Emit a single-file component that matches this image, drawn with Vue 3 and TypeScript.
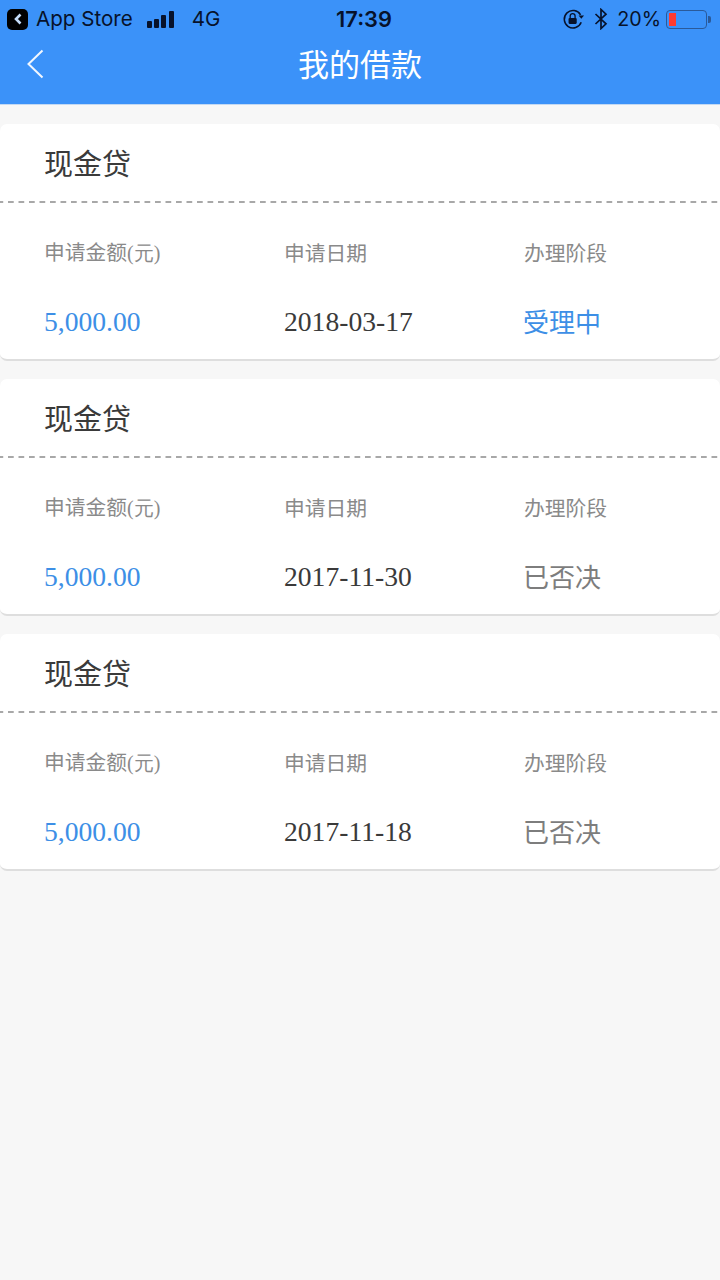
<script setup lang="ts">
interface Loan {
  date: string
  stage: string
  active: boolean
}
const loans: Loan[] = [
  { date: '2018-03-17', stage: '受理中', active: true },
  { date: '2017-11-30', stage: '已否决', active: false },
  { date: '2017-11-18', stage: '已否决', active: false },
]
</script>

<template>
  <div class="page">
    <header class="head">
      <div class="status">
        <div class="status-left">
          <span class="back-badge">
            <svg width="12" height="14" viewBox="0 0 12 14"><path d="M8.500 2.500 4 7l4.500 4.500" fill="none" stroke="#c4dcf9" stroke-width="2.600" /></svg>
          </span>
          <span class="st-text app">App Store</span>
          <span class="bars"><i class="b1"></i><i class="b2"></i><i class="b3"></i><i class="b4"></i></span>
          <span class="st-text net">4G</span>
        </div>
        <div class="time">17:39</div>
        <div class="status-right">
          <svg class="lock" width="24" height="22" viewBox="0 0 22 20">
            <path d="M17 6.200A8 8 0 1 0 17.600 13" fill="none" stroke="#07122b" stroke-width="1.400" />
            <path d="M15.200 7.800h5l-2.500 3z" fill="#07122b" transform="translate(0 -1)" />
            <rect x="6" y="9" width="7.500" height="5.500" rx="1" fill="#07122b" />
            <path d="M7.500 9V7.300a2.200 2.200 0 0 1 4.500 0V9" fill="none" stroke="#07122b" stroke-width="1.200" />
          </svg>
          <svg class="bt" width="14" height="22" viewBox="0 0 14 22">
            <path d="M1.500 6 12 15.800 7 20.500V1.500L12 6.200 1.500 16" fill="none" stroke="#07122b" stroke-width="1.700" />
          </svg>
          <span class="st-text pct">20%</span>
          <span class="battery"><span class="fill"></span></span>
          <span class="nub"></span>
        </div>
      </div>
      <div class="nav">
        <svg class="chev" width="18" height="30" viewBox="0 0 18 30"><path d="M16.500 1.500 2.500 15l14 13.500" fill="none" stroke="#f2f7fe" stroke-width="2" /></svg>
        <h1 class="title">我的借款</h1>
      </div>
    </header>

    <main class="list">
      <section v-for="loan in loans" :key="loan.date" class="card">
        <div class="card-head">
          <h2 class="card-title">现金贷</h2>
        </div>
        <div class="grid">
          <span class="label">申请金额<em>(元)</em></span>
          <span class="label">申请日期</span>
          <span class="label third">办理阶段</span>
          <span class="num blue">5,000.00</span>
          <span class="num">{{ loan.date }}</span>
          <span class="stage" :class="{ blue: loan.active }">{{ loan.stage }}</span>
        </div>
      </section>
    </main>
  </div>
</template>

<style>
html, body { margin: 0; background: #f7f7f7; }
</style>

<style scoped>
.page {
  width: 720px;
  height: 1280px;
  overflow: hidden;
  background: #f7f7f7;
  font-family: "Noto Sans CJK SC", "Liberation Sans", sans-serif;
}
.head {
  height: 104px;
  background: #3b92f9;
  border-bottom: 1px solid #c3d9f3;
}
.status {
  height: 38px;
  display: grid;
  grid-template-columns: 1fr auto 1fr;
  align-items: center;
  color: #07122b;
}
.status-left, .status-right { display: flex; align-items: center; }
.status-right { justify-content: flex-end; }
.st-text {
  font-family: Inter, "Liberation Sans", sans-serif;
  font-size: 20.600px;
  line-height: 24px;
}
.back-badge {
  width: 21px;
  height: 21px;
  margin-left: 7px;
  border-radius: 5px;
  background: #000;
  display: flex;
  align-items: center;
  justify-content: center;
}
.app { margin-left: 8px; }
.bars { display: flex; align-items: flex-end; gap: 2.300px; margin-left: 14px; height: 17px; }
.bars i { width: 5px; background: #07122b; border-radius: 1px; display: block; }
.b1 { height: 7px; }
.b2 { height: 9px; }
.b3 { height: 13px; }
.b4 { height: 17px; }
.net { margin-left: 18px; }
.time {
  margin-left: 8px;
  font-family: Inter, "Liberation Sans", sans-serif;
  font-size: 21.800px;
  font-weight: 600;
}
.lock { margin-right: 8px; }
.bt { margin-right: 9px; }
.pct { margin-right: 5px; font-size: 19.700px; }
.battery {
  width: 41px;
  height: 19px;
  box-sizing: border-box;
  border: 1.500px solid #2a5a9a;
  border-radius: 4px;
  padding: 2px 2px;
  display: flex;
}
.fill { width: 7px; background: #ff3b30; display: block; }
.nub { width: 3px; height: 7px; margin: 0 9px 0 1px; background: #2a5a9a; border-radius: 0 2px 2px 0; }
.nav {
  box-sizing: border-box;
  height: 66px;
  padding-bottom: 16px;
  position: relative;
  display: flex;
  align-items: center;
  justify-content: center;
}
.chev { position: absolute; left: 26px; top: 11px; }
.title {
  margin: 0;
  color: #fff;
  font-size: 31px;
  font-weight: 400;
  line-height: 50px;
}
.list {
  display: flex;
  flex-direction: column;
  gap: 18px;
  padding-top: 19px;
}
.card {
  height: 237px;
  box-sizing: border-box;
  background: #fff;
  border-radius: 7px;
  border-bottom: 2px solid #dedede;
}
.card-head {
  box-sizing: border-box;
  height: 79px;
  padding: 16px 0 0 44px;
  background-image: linear-gradient(90deg, #a8a8a8 6px, transparent 6px);
  background-size: 10.500px 2px;
  background-position: -2.500px 77px;
  background-repeat: repeat-x;
}
.card-title {
  margin: 0;
  color: #3a3a3a;
  font-size: 29px;
  font-weight: 400;
  line-height: 44px;
}
.grid {
  display: grid;
  grid-template-columns: 240px 239px 1fr;
  grid-template-rows: 70px 70px;
  padding: 0 0 0 44px;
  align-items: center;
}
.label { color: #8a8a8a; font-size: 20.750px; padding-top: 28px; line-height: 36px; }
.third { padding-left: 1px; }
.label em { font-style: normal; font-family: "Liberation Serif", serif; font-size: 20px; }
.num {
  font-family: "Liberation Serif", serif;
  font-size: 27.600px;
  color: #3a3a3a;
  padding-top: 28px;
  line-height: 36px;
}
.stage {
  font-size: 26px;
  color: #7d7d7d;
  padding-top: 26px;
  line-height: 36px;
}
.num.blue, .stage.blue { color: #3d8fe6; }
</style>
